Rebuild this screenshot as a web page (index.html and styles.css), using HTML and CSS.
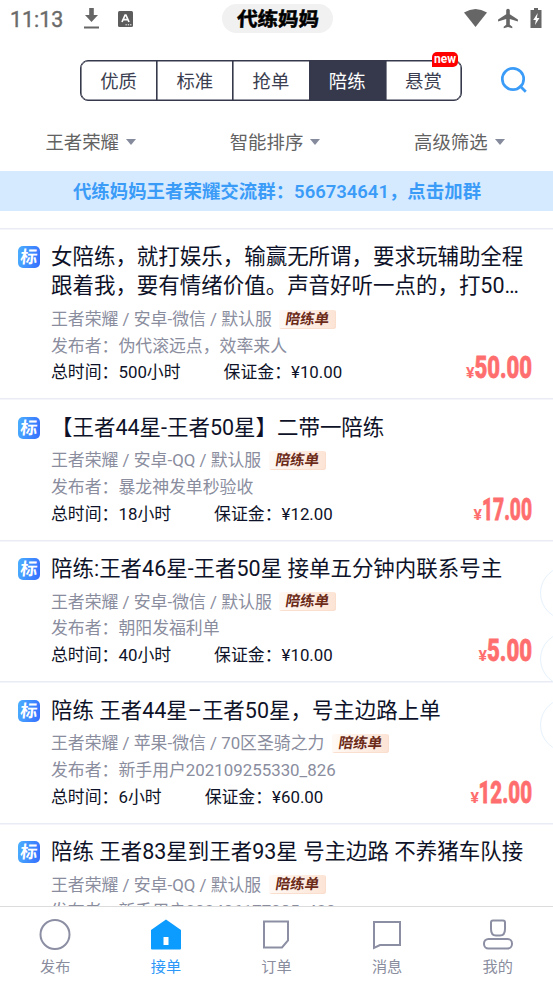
FILE: index.html
```html
<!DOCTYPE html>
<html lang="zh-CN">
<head>
<meta charset="utf-8">
<title>代练妈妈</title>
<link rel="stylesheet" href="styles.css">
</head>
<body>
<div class="app">
  <header class="status">
    <span class="clock">11:13</span>
    <svg class="st-down" width="17" height="22" viewBox="0 0 17 22"><path fill="#666" d="M6.200 0h4.600v7H15l-6.500 7-6.500-7h4.200zM1 18.500h15v2H1z"/></svg>
    <svg class="st-a" width="15" height="16" viewBox="0 0 15 16"><rect width="15" height="16" rx="1.500" fill="#5d5d5d"/><path d="M4 11 7.100 4h.8L11 11M5.200 8.700h4.600" fill="none" stroke="#fff" stroke-width="1.700"/><path d="M7.500 13.800h1.300m1 0h1.300m1 0h1.300" stroke="#fff"/></svg>
    <div class="brand"><span>代练妈妈</span></div>
    <svg class="st-right" width="82" height="22" viewBox="0 0 82 22"><path fill="#666" d="M1 4.500Q12.500-2.500 24 4.500L12.500 19z"/><path fill="#666" d="M54.900 13.500v-2.100L46.800 6.300V2.500a1.800 1.800 0 0 0-3.600 0v3.800l-8.100 5.100v2.100l8.100-2.500v5.800l-2.500 1.900v1.500l4.300-1.200 4.300 1.200v-1.500l-2.500-1.900V11z"/><path fill="#666" d="M71 0h4v2h3.500V20h-11V2H71z"/><path fill="#fff" d="m74.700 5-4.500 7h2.600l-.8 5 4.500-7h-2.600z"/></svg>
  </header>

  <div class="top">
    <div class="tabs">
      <span class="tab">优质</span><span class="tab">标准</span><span class="tab">抢单</span><span class="tab active">陪练</span><span class="tab">悬赏<b class="new">new</b></span>
    </div>
    <svg class="search" width="28" height="28" viewBox="0 0 28 28" fill="none" stroke="#3b9cf8" stroke-width="2.700"><circle cx="13" cy="13" r="10.700"/><path d="m19.500 19.500 6.300 6.300"/></svg>
  </div>

  <nav class="filters">
    <span>王者荣耀<i></i></span><span>智能排序<i></i></span><span>高级筛选<i></i></span>
  </nav>
  <div class="notice">代练妈妈王者荣耀交流群：566734641，点击加群</div>

  <main class="list">
    <article class="card">
      <div class="badge"><span>标</span></div>
      <div class="body">
        <h2>女陪练，就打娱乐，输赢无所谓，要求玩辅助全程<br>跟着我，要有情绪价值。声音好听一点的，打50…</h2>
        <p class="meta">王者荣耀 / 安卓-微信 / 默认服<span class="tag"><em>陪练单</em></span></p>
        <p>发布者：伪代滚远点，效率来人</p>
        <p class="info"><span>总时间：500小时</span><span>保证金：¥10.00</span></p>
      </div>
      <svg class="price" width="74" height="34"><text class="yen" x="4" y="27" textLength="8.500" lengthAdjust="spacingAndGlyphs">¥</text><text class="num" x="12.500" y="27" textLength="57.500" lengthAdjust="spacingAndGlyphs">50.00</text></svg>
    </article>
    <article class="card">
      <div class="badge"><span>标</span></div>
      <div class="body">
        <h2>【王者44星-王者50星】二带一陪练</h2>
        <p class="meta">王者荣耀 / 安卓-QQ / 默认服<span class="tag"><em>陪练单</em></span></p>
        <p>发布者：暴龙神发单秒验收</p>
        <p class="info"><span>总时间：18小时</span><span>保证金：¥12.00</span></p>
      </div>
      <svg class="price" width="74" height="34"><text class="yen" x="11.500" y="27" textLength="8.500" lengthAdjust="spacingAndGlyphs">¥</text><text class="num" x="20" y="27" textLength="50" lengthAdjust="spacingAndGlyphs">17.00</text></svg>
    </article>
    <article class="card">
      <div class="badge"><span>标</span></div>
      <div class="body">
        <h2>陪练:王者46星-王者50星 接单五分钟内联系号主</h2>
        <p class="meta">王者荣耀 / 安卓-微信 / 默认服<span class="tag"><em>陪练单</em></span></p>
        <p>发布者：朝阳发福利单</p>
        <p class="info"><span>总时间：40小时</span><span>保证金：¥10.00</span></p>
      </div>
      <svg class="price" width="74" height="34"><text class="yen" x="16.500" y="27" textLength="8.500" lengthAdjust="spacingAndGlyphs">¥</text><text class="num" x="25" y="27" textLength="45" lengthAdjust="spacingAndGlyphs">5.00</text></svg>
    </article>
    <article class="card">
      <div class="badge"><span>标</span></div>
      <div class="body">
        <h2>陪练 王者44星–王者50星，号主边路上单</h2>
        <p class="meta">王者荣耀 / 苹果-微信 / 70区圣骑之力<span class="tag"><em>陪练单</em></span></p>
        <p>发布者：新手用户202109255330_826</p>
        <p class="info"><span>总时间：6小时</span><span>保证金：¥60.00</span></p>
      </div>
      <svg class="price" width="74" height="34"><text class="yen" x="8.500" y="27" textLength="8.500" lengthAdjust="spacingAndGlyphs">¥</text><text class="num" x="16.500" y="27" textLength="53.500" lengthAdjust="spacingAndGlyphs">12.00</text></svg>
    </article>
    <article class="card">
      <div class="badge"><span>标</span></div>
      <div class="body">
        <h2>陪练 王者83星到王者93星 号主边路 不养猪车队接</h2>
        <p class="meta">王者荣耀 / 安卓-QQ / 默认服<span class="tag"><em>陪练单</em></span></p>
        <p>发布者：新手用户202406177085_420</p>
      </div>
    </article>
  </main>

  <nav class="bottom">
    <span class="item"><svg width="32" height="32" viewBox="0 0 32 32"><circle cx="16" cy="15.500" r="14.500"/></svg>发布</span>
    <span class="item on"><svg width="32" height="32" viewBox="0 0 32 32"><path class="solid" d="M16 .5 31 11v18.500q0 1-1 1H2q-1 0-1-1V11z"/><path fill="#fff" stroke="none" d="M13.500 18h5v8h-5z"/></svg>接单</span>
    <span class="item"><svg width="32" height="32" viewBox="0 0 32 32"><path d="M4 2.500h24v19l-6 7H4z"/></svg>订单</span>
    <span class="item"><svg width="32" height="32" viewBox="0 0 32 32"><path d="M3 3h26v23H9L3 29z"/></svg>消息</span>
    <span class="item"><svg width="32" height="32" viewBox="0 0 32 32"><path d="M11 1.500h10q2 0 2 2V10q0 6.500-5 6.500h-4Q9 16.500 9 10V3.500q0-2 2-2z"/><rect x="2" y="20" width="28" height="9.500" rx="4.500"/></svg>我的</span>
  </nav>
  <div class="floats"><i></i><i></i><i></i></div>
</div>
</body>
</html>
```
FILE: styles.css
```css
* { box-sizing: border-box; }
body {
  margin: 0;
  background: #fff;
  font-family: Roboto, "Noto Sans CJK SC", sans-serif;
  color: #0e1228;
}
.app {
  position: relative;
  display: flex;
  flex-direction: column;
  width: 553px;
  height: 984px;
  overflow: hidden;
}
.status {
  display: flex;
  align-items: center;
  flex: none;
  height: 38px;
  padding: 0 8px 0 10px;
}
.clock {
  width: 74px;
  padding-top: 1px;
  font-size: 21.4px;
  font-weight: 400;
  -webkit-text-stroke: .4px #6a6a6a;
  line-height: 38px;
  color: #6a6a6a;
}
.st-down { margin-left: -1px; }
.st-a { margin-left: 18px; }
.brand {
  width: 111px;
  height: 29px;
  margin: 0 0 2px 89px;
  border-radius: 15px;
  background: #f1f1f1;
  text-align: center;
  font-size: 20.5px;
  font-weight: 700;
  line-height: 30px;
  color: #000;
  -webkit-text-stroke: .6px #000;
}
.brand span { display: inline-block; transform: skewX(-3deg) scaleY(.95); }
.st-right { margin-left: auto; }

.top {
  display: flex;
  align-items: flex-start;
  flex: none;
  height: 82px;
  padding: 22px 0 0 80px;
}
.tabs {
  display: flex;
  width: 382px;
  height: 41px;
  border: 1px solid #36394b;
  border-radius: 8px;
  box-shadow: inset 0 0 0 .6px #36394b;
}
.tab {
  position: relative;
  flex: 1;
  text-align: center;
  font-size: 18.4px;
  line-height: 42px;
  color: #3b3e50;
}
.tab + .tab {
  border-left: 1px solid #36394b;
  box-shadow: inset .6px 0 #36394b;
}
.tab.active { background: #36394b; color: #fff; }
.new {
  position: absolute;
  right: 3px;
  top: -9px;
  width: 26px;
  height: 15px;
  border-radius: 5px 5px 5px 0;
  background: #f00;
  color: #fff;
  font-size: 12px;
  line-height: 15px;
}
.search { margin: 6px 0 0 38px; }

.filters {
  display: flex;
  flex: none;
  height: 50.5px;
  padding-top: 5px;
}
.filters span {
  display: flex;
  flex: 1;
  align-items: center;
  justify-content: center;
  padding-right: 3px;
  font-size: 18.4px;
  line-height: 36px;
  height: 36px;
  color: #626262;
}
.filters i {
  margin: -2px 0 0 7px;
  border: 5.5px solid transparent;
  border-top: 6px solid #858b9c;
  border-bottom: 0;
}
.notice {
  flex: none;
  height: 40.5px;
  padding-left: 1px;
  background: #d6eaff;
  text-align: center;
  font-size: 18.45px;
  font-weight: 600;
  line-height: 43px;
  color: #3b9cf8;
}

.list {
  flex: 1;
  min-height: 0;
  padding-top: 16.6px;
  overflow: hidden;
}
.card {
  display: flex;
  position: relative;
  height: 141.5px;
  padding: 13.3px 0 0 18px;
  border-top: 1px solid #e9ecf4;
  box-shadow: inset 0 1px #f3f5fa;
}
.card:first-child { height: 170.8px; }
.badge {
  flex: none;
  width: 22px;
  height: 22px;
  margin: 4px 11px 0 0;
  border-radius: 5px;
  background: linear-gradient(100deg, #4bb0ff, #356dff);
  color: #fff;
  font-size: 17px;
  font-weight: 700;
  line-height: 22px;
  text-align: center;
}
.badge span { display: block; transform: skewX(-6deg); }
h2 {
  margin: 0 0 5px;
  font-size: 21.48px;
  font-weight: 400;
  line-height: 29.4px;
  white-space: nowrap;
}
p {
  margin: 0;
  font-size: 16.87px;
  line-height: 26.8px;
  height: 26.8px;
  color: #8a8d9e;
  white-space: nowrap;
}
.meta { display: flex; align-items: center; }
.tag {
  width: 57px;
  height: 19px;
  margin-left: 7.5px;
  border-radius: 3px;
  background: linear-gradient(90deg, #fff9f5, #fce4d5);
  box-shadow: inset -1px -1px #fbdfce;
  color: #6c2a18;
  font-size: 14.5px;
  font-weight: 600;
  line-height: 19px;
  text-align: center;
}
.tag em { display: block; font-style: normal; transform: skewX(-9deg); }
.info { display: flex; gap: 43px; color: #0e1228; }
.price {
  position: absolute;
  right: 17px;
  bottom: 13px;
  overflow: visible;
  fill: #ff6e6e;
}
.yen { font-size: 14px; font-weight: 700; }
.num {
  font-size: 30.5px;
  font-weight: 800;
  stroke: #ff6e6e;
  stroke-width: .8px;
}

.bottom {
  display: flex;
  flex: none;
  height: 78px;
  border-top: 1px solid #dcdcdc;
  background: #fff;
}
.item {
  display: flex;
  flex: 1;
  flex-direction: column;
  align-items: center;
  padding-top: 12px;
  font-size: 15.2px;
  line-height: 32px;
  color: #8a8d9e;
}
.item svg { fill: none; stroke: #8c8fa3; stroke-width: 2; }
.item.on { color: #2b97f8; }
.item .solid { fill: #0c9bff; stroke: none; }

.floats {
  position: absolute;
  left: 540px;
  top: 566px;
  display: grid;
  gap: 12px;
}
.floats i {
  width: 54px;
  height: 54px;
  border: 1px solid #e6f1fc;
  border-radius: 50%;
}
```
